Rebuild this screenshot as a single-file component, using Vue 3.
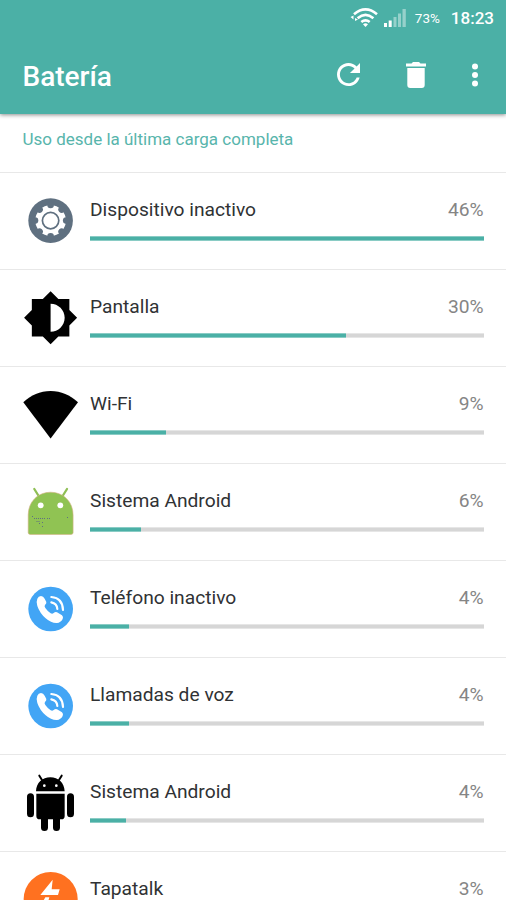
<script setup>
const items = [
  { name: 'Dispositivo inactivo', pct: 46, fill: 100, icon: 'gear' },
  { name: 'Pantalla', pct: 30, fill: 65, icon: 'screen' },
  { name: 'Wi-Fi', pct: 9, fill: 19.2, icon: 'wifi' },
  { name: 'Sistema Android', pct: 6, fill: 13, icon: 'head' },
  { name: 'Teléfono inactivo', pct: 4, fill: 10, icon: 'phone' },
  { name: 'Llamadas de voz', pct: 4, fill: 10, icon: 'phone' },
  { name: 'Sistema Android', pct: 4, fill: 9.1, icon: 'robot' },
  { name: 'Tapatalk', pct: 3, fill: 7, icon: 'tapatalk' },
]
const notches = [0, 45, 90, 135, 180, 225, 270, 315]
</script>

<template>
  <div class="screen">
    <header class="top">
      <div class="status">
        <svg class="s-wifi" viewBox="0 0 30 20" width="30" height="20">
          <g fill="none" stroke="#fff" stroke-width="2.6">
            <path d="M5 6.200Q16.500-3.400 28 6.200" />
            <path d="M8.600 10.300Q16.500 3.600 24.400 10.300" />
            <path d="M12.300 14Q16.500 10.600 20.700 14" />
          </g>
          <path d="M14 16.200Q16.500 14.400 19 16.200L16.500 19Z" fill="#fff" />
          <path d="M1.500 9L4.500 7.500V11.500ZM6 10l3 1.500L6 13Z" fill="#fff" />
        </svg>
        <svg class="s-cell" viewBox="0 0 24 20" width="24" height="20">
          <path d="M1 15h3v4H1zM5.700 12.500h3V19h-3z" fill="#fff" />
          <path d="M10.500 9h3v10h-3zM15 5.500h3V19h-3zM19.500 1h3.300v18h-3.300z" fill="#fff" opacity=".42" />
        </svg>
        <span class="s-pct">73%</span>
        <span class="s-time">18:23</span>
      </div>
      <div class="bar">
        <h1>Batería</h1>
        <svg class="refresh" viewBox="4 4 16 16" width="23" height="23"><path fill="#fff" d="M17.650 6.350C16.200 4.900 14.210 4 12 4c-4.420 0-7.990 3.580-7.990 8s3.570 8 7.990 8c3.730 0 6.840-2.550 7.730-6h-2.080c-.82 2.330-3.040 4-5.650 4-3.310 0-6-2.690-6-6s2.690-6 6-6c1.660 0 3.140.69 4.220 1.780L13 11h7V4l-2.350 2.350z" /></svg>
        <svg class="trash" viewBox="0 0 20 26" width="20" height="26"><path fill="#fff" d="M0 1.500h5.500L7 0h6l1.500 1.500H20v3H0zM1.300 6h17.400v17q0 3-3 3H4.300q-3 0-3-3z" /></svg>
        <svg class="more" viewBox="0 0 6 24" width="6" height="24"><g fill="#fff"><circle cx="3" cy="3.500" r="3" /><circle cx="3" cy="12" r="3" /><circle cx="3" cy="20.500" r="3" /></g></svg>
      </div>
    </header>
    <div class="caption">Uso desde la última carga completa</div>
    <div v-for="(item, i) in items" :key="i" class="row">
      <svg class="icon" viewBox="0 0 60 60" width="60" height="60">
        <g v-if="item.icon === 'gear'">
          <circle cx="30.600" cy="30.600" r="22.300" fill="#5f7080" />
          <circle cx="30.600" cy="30.600" r="15.300" fill="#fff" />
          <circle v-for="a in notches" :key="a" cx="30.600" cy="15" r="3.300" fill="#5f7080" :transform="`rotate(${a} 30.6 30.6)`" />
          <circle cx="30.600" cy="30.600" r="8.200" fill="#fff" stroke="#5f7080" stroke-width="1.700" />
        </g>
        <path v-else-if="item.icon === 'screen'" transform="translate(2.460 2.560) scale(2.345)" d="M20 15.310L23.310 12 20 8.690V4h-4.690L12 .69 8.690 4H4v4.690L.69 12 4 15.310V20h4.690L12 23.310 15.310 20H20v-4.690zM12 18V6c3.310 0 6 2.690 6 6s-2.690 6-6 6z" />
        <path v-else-if="item.icon === 'wifi'" d="M30.600 54.500L3.300 18.300C11 11 20 7 30.600 7S50 11 58 18.300Z" />
        <g v-else-if="item.icon === 'head'">
          <path d="M14.300 8L19 15.500M47 8L42.300 15.500" stroke="#8fbf55" stroke-width="2.300" stroke-linecap="round" />
          <path d="M8.200 34C8.200 20.500 18 11.200 30.600 11.200S53.100 20.500 53.100 34V51.500Q53.100 53.500 51 53.500H10.300Q8.200 53.500 8.200 51.500Z" fill="#90c353" stroke="#d5b184" stroke-width=".6" />
          <circle cx="20.700" cy="24.300" r="2.900" fill="#fff" /><circle cx="40.300" cy="24.300" r="2.900" fill="#fff" />
          <path d="M12 35.500h1M14 37.500h9M24 37.500h1M27 37.500h1M29 37.500h1M16.500 40.500h3M19 42.500h1M22 41.500h1M22 45.500h1M47 36.500h1" stroke="#5f7080" stroke-dasharray="1 1" />
        </g>
        <g v-else-if="item.icon === 'phone'" transform="scale(.33333) translate(-30 -24)">
          <circle cx="122" cy="117" r="67" fill="#42a5f5" />
          <path fill="#fff" d="M82 86Q85 79 93 78Q100 78 104 86L109 96Q110 101 105 105Q102 108 106 114Q113 124 122 130Q127 133 131 129Q136 125 141 127L156 136Q161 141 158 147Q152 158 141 159Q124 160 107 145Q89 129 82 108Q78 94 82 86Z" />
          <path d="M124 81Q158 84 159 120M124 97Q141 100 142 117" fill="none" stroke="#fff" stroke-width="6.500" stroke-linecap="round" />
        </g>
        <g v-else-if="item.icon === 'robot'" transform="scale(.33333) translate(-30 -66)">
          <path d="M88 77L96 90M155 77L147 90" stroke="#000" stroke-width="6" stroke-linecap="round" />
          <path d="M78 124C79 98 97 82 121 82S163 98 164 124ZM79 131H164V198Q164 208 154 208H89Q79 208 79 198Z" />
          <rect x="51" y="130" width="21" height="72" rx="10.500" /><rect x="171" y="130" width="21" height="72" rx="10.500" />
          <rect x="93" y="190" width="21" height="53" rx="10.500" /><rect x="129" y="190" width="21" height="53" rx="10.500" />
          <circle cx="103" cy="107" r="4" fill="#fff" /><circle cx="139" cy="107" r="4" fill="#fff" />
        </g>
        <g v-else transform="scale(.33333) translate(-30 -357)">
          <circle cx="122" cy="447" r="81" fill="#ff7120" />
          <path fill="#fff" d="M128 389L91 435H144L149 418H125ZM106 442H118L114 456H98Z" />
        </g>
      </svg>
      <div class="body">
        <div class="line"><span class="name">{{ item.name }}</span><span class="pct">{{ item.pct }}%</span></div>
        <div class="track"><div class="fill" :style="{ width: item.fill + '%' }"></div></div>
      </div>
    </div>
  </div>
</template>

<style>
body { margin: 0; background: #fff; overflow: hidden; }
</style>
<style scoped>
.screen { width: 506px; height: 900px; overflow: hidden; background: #fff; font-family: Roboto, sans-serif; }
.top { height: 114px; background: #4bb0a6; color: #fff; box-shadow: 0 1px 4px rgba(0, 0, 0, .45); }
.status { height: 36px; display: flex; align-items: center; justify-content: flex-end; padding-right: 12px; box-sizing: border-box; }
.s-cell { margin-left: 4px; }
.s-pct { font-size: 13.500px; margin-left: 8px; width: 26px; white-space: nowrap; }
.s-time { font-size: 17px; font-weight: 500; margin-left: 10px; }
.bar { height: 77px; display: flex; align-items: center; padding: 0 28px 0 22.500px; }
h1 { flex: 1; margin: 4px 0 0; font-size: 28px; line-height: 32px; font-weight: 500; }
.trash { margin-left: 46px; }
.more { margin-left: 46px; }
.caption { height: 58px; box-sizing: border-box; padding: 15px 22.500px 0; font-size: 17px; line-height: 20px; color: #58b5ac; }
.row { height: 97px; box-sizing: border-box; border-top: 1px solid #e8e8e8; display: flex; padding: 17px 22.500px 0 20px; }
.icon { flex: none; }
.body { flex: 1; margin-left: 10px; padding-top: 8px; }
.line { display: flex; justify-content: space-between; font-size: 19.200px; line-height: 24px; }
.name { color: #303234; }
.pct { color: #858585; }
.track { height: 5px; margin-top: 14px; background: linear-gradient(#e6e6e6 1px, #d6d6d6 1px 4px, #e6e6e6 4px); }
.fill { height: 5px; background: linear-gradient(#8accc5 1px, #4bb0a6 1px 4px, #8accc5 4px); }
</style>
